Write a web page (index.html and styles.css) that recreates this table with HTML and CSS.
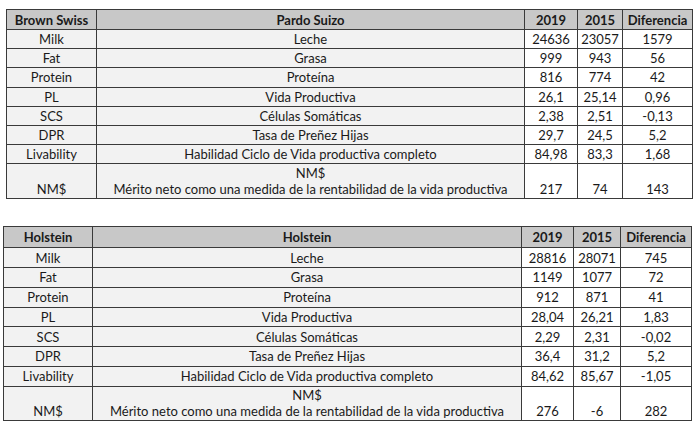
FILE: index.html
```html
<!DOCTYPE html>
<html lang="es">
<head>
<meta charset="utf-8">
<title>Brown Swiss / Holstein</title>
<link rel="stylesheet" href="styles.css">
</head>
<body>
<table class="grid grid-one">
  <colgroup>
    <col class="c-en"><col class="c-es"><col class="c-y1"><col class="c-y2"><col class="c-diff">
  </colgroup>
  <tr class="head"><th>Brown Swiss</th><th>Pardo Suizo</th><th>2019</th><th>2015</th><th>Diferencia</th></tr>
  <tr><td class="lbl">Milk</td><td class="lbl">Leche</td><td>24636</td><td>23057</td><td>1579</td></tr>
  <tr><td class="lbl">Fat</td><td class="lbl">Grasa</td><td>999</td><td>943</td><td>56</td></tr>
  <tr><td class="lbl">Protein</td><td class="lbl">Proteína</td><td>816</td><td>774</td><td>42</td></tr>
  <tr><td class="lbl">PL</td><td class="lbl">Vida Productiva</td><td>26,1</td><td>25,14</td><td>0,96</td></tr>
  <tr><td class="lbl">SCS</td><td class="lbl">Células Somáticas</td><td>2,38</td><td>2,51</td><td>-0,13</td></tr>
  <tr><td class="lbl">DPR</td><td class="lbl">Tasa de Preñez Hijas</td><td>29,7</td><td>24,5</td><td>5,2</td></tr>
  <tr><td class="lbl">Livability</td><td class="lbl">Habilidad Ciclo de Vida productiva completo</td><td>84,98</td><td>83,3</td><td>1,68</td></tr>
  <tr class="tall"><td class="lbl">NM$</td><td class="lbl">NM$<br>Mérito neto como una medida de la rentabilidad de la vida productiva</td><td>217</td><td>74</td><td>143</td></tr>
</table>

<table class="grid grid-two">
  <colgroup>
    <col class="c-en"><col class="c-es"><col class="c-y1"><col class="c-y2"><col class="c-diff">
  </colgroup>
  <tr class="head"><th>Holstein</th><th>Holstein</th><th>2019</th><th>2015</th><th>Diferencia</th></tr>
  <tr><td class="lbl">Milk</td><td class="lbl">Leche</td><td>28816</td><td>28071</td><td>745</td></tr>
  <tr><td class="lbl">Fat</td><td class="lbl">Grasa</td><td>1149</td><td>1077</td><td>72</td></tr>
  <tr><td class="lbl">Protein</td><td class="lbl">Proteína</td><td>912</td><td>871</td><td>41</td></tr>
  <tr><td class="lbl">PL</td><td class="lbl">Vida Productiva</td><td>28,04</td><td>26,21</td><td>1,83</td></tr>
  <tr><td class="lbl">SCS</td><td class="lbl">Células Somáticas</td><td>2,29</td><td>2,31</td><td>-0,02</td></tr>
  <tr><td class="lbl">DPR</td><td class="lbl">Tasa de Preñez Hijas</td><td>36,4</td><td>31,2</td><td>5,2</td></tr>
  <tr><td class="lbl">Livability</td><td class="lbl">Habilidad Ciclo de Vida productiva completo</td><td>84,62</td><td>85,67</td><td>-1,05</td></tr>
  <tr class="tall"><td class="lbl">NM$</td><td class="lbl">NM$<br>Mérito neto como una medida de la rentabilidad de la vida productiva</td><td>276</td><td>-6</td><td>282</td></tr>
</table>
</body>
</html>
```
FILE: styles.css
```css
html, body {
  margin: 0;
  padding: 0;
  background: #ffffff;
}

body {
  font-family: Lato, "Liberation Sans", sans-serif;
  font-size: 13px;
  color: #1a1a1a;
}

.grid {
  border-collapse: collapse;
  table-layout: fixed;
  border: 1px solid #3a3a3a;
}

.grid-one {
  margin: 9px 0 0 6px;
  width: 686px;
}

.grid-two {
  margin: 27px 0 0 3px;
  width: 688px;
}

.grid-one .c-en { width: 90px; }
.grid-one .c-es { width: 428px; }
.grid-one .c-y1 { width: 53px; }
.grid-one .c-y2 { width: 45px; }
.grid-one .c-diff { width: 70px; }

.grid-two .c-en { width: 89px; }
.grid-two .c-es { width: 429px; }
.grid-two .c-y1 { width: 52px; }
.grid-two .c-y2 { width: 47px; }
.grid-two .c-diff { width: 71px; }

.grid th,
.grid td {
  border: 1px solid #3a3a3a;
  padding: 0 2px;
  text-align: center;
  vertical-align: middle;
  line-height: 16px;
  height: 18.2px;
  white-space: nowrap;
  overflow: hidden;
}

.grid-two td {
  height: 18.75px;
}

.grid th {
  background: #c8c8c8;
  font-weight: 700;
  height: 19px;
}

.grid-two th {
  height: 20px;
}

.grid td.lbl {
  background: #f2f2f2;
}

.grid tr.tall td {
  vertical-align: bottom;
  height: 33px;
  padding-bottom: 1px;
}

.grid-two tr.tall td {
  height: 32px;
}
```
